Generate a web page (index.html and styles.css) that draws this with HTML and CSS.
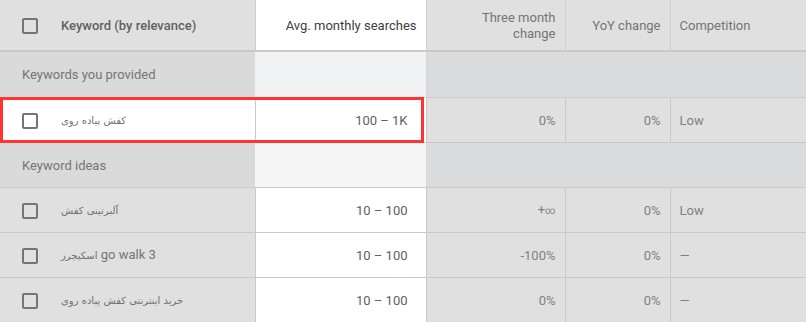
FILE: index.html
```html
<!DOCTYPE html>
<html lang="en">
<head>
<meta charset="utf-8">
<title>Keyword ideas</title>
<link rel="stylesheet" href="styles.css">
</head>
<body>
<table class="kw-table">
  <colgroup>
    <col class="c-kw">
    <col class="c-avg">
    <col class="c-three">
    <col class="c-yoy">
    <col class="c-comp">
  </colgroup>
  <thead>
    <tr class="head-row">
      <th class="h-kw"><div class="kw-cell"><span class="checkbox"></span><span>Keyword (by relevance)</span></div></th>
      <th class="h-avg num">Avg. monthly searches</th>
      <th class="h-other num">Three month<br>change</th>
      <th class="h-other num">YoY change</th>
      <th class="h-other">Competition</th>
    </tr>
  </thead>
  <tbody>
    <tr class="section-row s-first">
      <td class="sec-kw">Keywords you provided</td>
      <td class="sec-avg"></td>
      <td class="sec-rest" colspan="3"></td>
    </tr>
    <tr class="data-row highlight-row">
      <td class="d-kw highlighted"><div class="kw-cell"><span class="checkbox"></span><span class="kw-text"><span class="fa">کفش پیاده روی</span></span></div></td>
      <td class="d-avg num">100 – 1K</td>
      <td class="d-val num">0%</td>
      <td class="d-val num">0%</td>
      <td class="d-val">Low</td>
    </tr>
    <tr class="section-row">
      <td class="sec-kw">Keyword ideas</td>
      <td class="sec-avg sec-avg2"></td>
      <td class="sec-rest" colspan="3"></td>
    </tr>
    <tr class="data-row">
      <td class="d-kw"><div class="kw-cell"><span class="checkbox"></span><span class="kw-text"><span class="fa">آلبرتینی کفش</span></span></div></td>
      <td class="d-avg num">10 – 100</td>
      <td class="d-val num">+<span class="inf">∞</span></td>
      <td class="d-val num">0%</td>
      <td class="d-val">Low</td>
    </tr>
    <tr class="data-row">
      <td class="d-kw"><div class="kw-cell"><span class="checkbox"></span><span class="kw-text"><span class="fa">اسکیچرز</span> go walk 3</span></div></td>
      <td class="d-avg num">10 – 100</td>
      <td class="d-val num">-100%</td>
      <td class="d-val num">0%</td>
      <td class="d-val">—</td>
    </tr>
    <tr class="data-row">
      <td class="d-kw"><div class="kw-cell"><span class="checkbox"></span><span class="kw-text"><span class="fa">خرید اینترنتی کفش پیاده روی</span></span></div></td>
      <td class="d-avg num">10 – 100</td>
      <td class="d-val num">0%</td>
      <td class="d-val num">0%</td>
      <td class="d-val">—</td>
    </tr>
  </tbody>
</table>
</body>
</html>
```
FILE: styles.css
```css
html, body {
  margin: 0;
  padding: 0;
  background: #e0e0e0;
}
body {
  font-family: Roboto, "DejaVu Sans", sans-serif;
  font-size: 13px;
  color: #757575;
}
.kw-table {
  width: 806px;
  table-layout: fixed;
  border-collapse: collapse;
  border-spacing: 0;
}
.c-kw { width: 255px; }
.c-avg { width: 171px; }
.c-three { width: 139px; }
.c-yoy { width: 105px; }
.c-comp { width: 136px; }

th, td {
  padding: 0 9px;
  text-align: left;
  vertical-align: middle;
  line-height: 16px;
  white-space: nowrap;
}
.num { text-align: right; }

/* header */
.head-row th {
  height: 48px;
  padding-top: 2px;
  background: #e0e0e0;
  border-bottom: 2px solid #c9c9c9;
  border-left: 1px solid #cfcfcf;
  font-weight: 400;
  color: #757575;
}
.head-row th:first-child { border-left: none; }
.head-row .h-kw {
  padding-left: 22px;
  font-weight: 500;
  color: #616161;
}
.head-row .h-avg {
  background: #ffffff;
  color: #3c4043;
}

.kw-cell {
  display: flex;
  align-items: center;
  gap: 23px;
}
.checkbox {
  flex: none;
  width: 16px;
  height: 16px;
  box-sizing: border-box;
  border: 2px solid #757575;
  border-radius: 2px;
}

/* section rows */
.section-row td {
  height: 43px;
  padding-top: 1px;
  border-bottom: 1px solid #cbcbcb;
}
.s-first td { height: 44px; }
.sec-kw {
  background: #dadada;
  padding-left: 22px;
  color: #757575;
}
.sec-avg {
  background: #f1f2f4;
  border-right: 1px solid #d6d6d6;
}
.sec-avg2 { background: #f5f5f5; }
.sec-rest { background: #dadbdc; }

/* data rows */
.data-row td {
  height: 43px;
  padding-top: 1px;
  background: #e0e0e0;
  border-bottom: 1px solid #c9c9c9;
  border-left: 1px solid #cacaca;
  color: #808080;
}
.data-row td:first-child { border-left: none; }
.data-row .d-kw { padding-left: 22px; }
.data-row .d-avg {
  background: #ffffff;
  color: #616161;
  padding-right: 18px;
}
.highlight-row .d-kw { background: #ffffff; }

.kw-text {
  color: #757575;
}
.fa {
  font-family: "DejaVu Sans", sans-serif;
  font-size: 10px;
  color: #6f6f6f;
}
.inf {
  font-size: 10px;
}

.highlighted { position: relative; }
.highlighted::after {
  content: "";
  position: absolute;
  left: 0;
  top: -1px;
  width: 424px;
  height: 46px;
  box-sizing: border-box;
  border: 3px solid #ff3333;
  pointer-events: none;
}
```
